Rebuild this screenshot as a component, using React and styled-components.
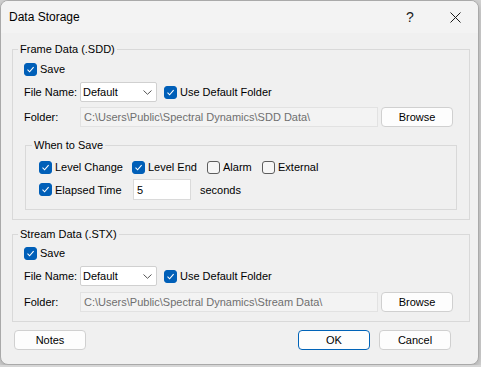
import React from 'react';
import styled, { createGlobalStyle } from 'styled-components';

const GlobalStyle = createGlobalStyle`
  html, body {
    margin: 0;
    padding: 0;
    background: #d6d6d6;
  }
  body {
    font-family: "Liberation Sans", Arial, sans-serif;
    font-size: 11px;
    color: #000;
  }
`;

const Window = styled.div`
  width: 477px;
  height: 363px;
  border: 1px solid #a9a9a9;
  border-radius: 8px;
  background: #f0f0f0;
  overflow: hidden;
  box-shadow: 0 2px 8px rgba(0, 0, 0, 0.25);
  display: flex;
  flex-direction: column;
`;

const TitleBar = styled.div`
  height: 32px;
  flex: none;
  display: flex;
  align-items: center;
  padding-left: 8px;
  background: #f3f3f3;
`;

const Title = styled.div`
  flex: 1;
  font-size: 12px;
`;

const TitleButton = styled.div`
  width: ${(p) => p.w}px;
  height: 32px;
  display: flex;
  align-items: center;
  justify-content: center;
  font-size: 14px;
  color: #1a1a1a;
`;

const Content = styled.div`
  padding: 8px 8px 0 11px;
  display: flex;
  flex-direction: column;
`;

const Group = styled.fieldset`
  margin: ${(p) => p.mt || 0}px 0 0 ${(p) => p.ml || 0}px;
  min-width: 0;
  border: 1px solid #d9d9d9;
  padding: ${(p) => p.pad};
`;

const Legend = styled.legend`
  padding: 0 2px;
  margin-left: ${(p) => p.ml}px;
  line-height: 16px;
  height: 16px;
`;

const Row = styled.div`
  display: flex;
  align-items: center;
  height: ${(p) => p.h || 20}px;
  margin-top: ${(p) => p.mt || 0}px;
`;

const Label = styled.span`
  width: ${(p) => (p.w ? `${p.w}px` : 'auto')};
  margin-left: ${(p) => p.ml || 0}px;
  flex: none;
  white-space: nowrap;
`;

const CheckWrap = styled.label`
  display: flex;
  align-items: center;
  gap: 3px;
  white-space: nowrap;
  width: ${(p) => (p.w ? `${p.w}px` : 'auto')};
  flex: none;
  margin-left: ${(p) => p.ml || 0}px;
`;

const Box = styled.span`
  width: 13px;
  height: 13px;
  box-sizing: border-box;
  border-radius: 3px;
  display: flex;
  align-items: center;
  justify-content: center;
  background: ${(p) => (p.on ? '#005fb8' : '#f6f6f6')};
  border: 1px solid ${(p) => (p.on ? '#005fb8' : '#5d5d5d')};
`;

const Combo = styled.div`
  width: 77px;
  height: 20px;
  box-sizing: border-box;
  background: #fff;
  border: 1px solid #d0d0d0;
  border-radius: 2px;
  display: flex;
  align-items: center;
  justify-content: space-between;
  padding: 0 4px 0 2px;
  flex: none;
`;

const Field = styled.div`
  width: ${(p) => p.w}px;
  height: ${(p) => p.h || 20}px;
  box-sizing: border-box;
  flex: none;
  display: flex;
  align-items: center;
  padding-left: 3px;
  border: 1px solid ${(p) => (p.disabled ? '#e2e2e2' : '#dadada')};
  background: ${(p) => (p.disabled ? '#f3f3f3' : '#fff')};
  color: ${(p) => (p.disabled ? '#6f6f6f' : '#000')};
  white-space: nowrap;
  overflow: hidden;
`;

const Button = styled.button`
  width: 72px;
  height: 20px;
  flex: none;
  box-sizing: border-box;
  font-family: inherit;
  font-size: 11px;
  color: #000;
  background: #fdfdfd;
  border: 1px solid ${(p) => (p.primary ? '#0063b8' : '#d0d0d0')};
  border-radius: 4px;
  margin-left: ${(p) => p.ml || 0}px;
  padding: 0;
`;

const ButtonBar = styled.div`
  display: flex;
  align-items: center;
  margin-top: 8px;
  padding: 0 19px 0 2px;
`;

const Spacer = styled.div`
  flex: 1;
`;

const Check = ({ on, children, w, ml }) => (
  <CheckWrap w={w} ml={ml}>
    <Box on={on}>
      {on && (
        <svg width="9" height="9" viewBox="0 0 9 9">
          <path d="M1.5 4.7 L3.6 6.8 L7.6 2.2" fill="none" stroke="#fff" strokeWidth="1.1" />
        </svg>
      )}
    </Box>
    {children}
  </CheckWrap>
);

const Chevron = () => (
  <svg width="9" height="5" viewBox="0 0 9 5">
    <path d="M0.5 0.5 L4.5 4.3 L8.5 0.5" fill="none" stroke="#555" strokeWidth="1" />
  </svg>
);

const FileRows = ({ folder, folderGap }) => (
  <>
    <Row mt={3}>
      <Label w={56}>File Name:</Label>
      <Combo>
        Default
        <Chevron />
      </Combo>
      <Check on ml={7}>Use Default Folder</Check>
    </Row>
    <Row mt={folderGap}>
      <Label w={56}>Folder:</Label>
      <Field w={298} disabled>{folder}</Field>
      <Button ml={3}>Browse</Button>
    </Row>
  </>
);

export default function App() {
  return (
    <>
      <GlobalStyle />
      <Window>
        <TitleBar>
          <Title>Data Storage</Title>
          <TitleButton w={44}>?</TitleButton>
          <TitleButton w={46}>
            <svg width="11" height="11" viewBox="0 0 11 11">
              <path d="M0.5 0.5 L10.5 10.5 M10.5 0.5 L0.5 10.5" stroke="#1a1a1a" strokeWidth="1" />
            </svg>
          </TitleButton>
        </TitleBar>
        <Content>
          <Group pad="2px 12px 9px 11px">
            <Legend ml={-6}>Frame Data (.SDD)</Legend>
            <Row>
              <Check on>Save</Check>
            </Row>
            <FileRows folder="C:\Users\Public\Spectral Dynamics\SDD Data\" folderGap={5} />
            <Group mt={10} ml={1} pad="4px 8px 9px 13px">
              <Legend ml={-7}>When to Save</Legend>
              <Row>
                <Check on w={93}>Level Change</Check>
                <Check on w={75}>Level End</Check>
                <Check w={55}>Alarm</Check>
                <Check>External</Check>
              </Row>
              <Row mt={2} h={21}>
                <Check on w={94}>Elapsed Time</Check>
                <Field w={58} h={21}>5</Field>
                <Label ml={9}>seconds</Label>
              </Row>
            </Group>
          </Group>
          <Group mt={6} pad="1px 12px 9px 11px">
            <Legend ml={-6}>Stream Data (.STX)</Legend>
            <Row>
              <Check on>Save</Check>
            </Row>
            <FileRows folder="C:\Users\Public\Spectral Dynamics\Stream Data\" folderGap={6} />
          </Group>
          <ButtonBar>
            <Button>Notes</Button>
            <Spacer />
            <Button primary>OK</Button>
            <Button ml={9}>Cancel</Button>
          </ButtonBar>
        </Content>
      </Window>
    </>
  );
}
